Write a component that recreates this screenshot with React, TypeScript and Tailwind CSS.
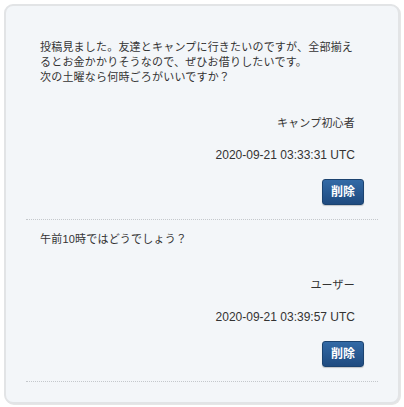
const comments = [
  {
    id: 1,
    body: "投稿見ました。友達とキャンプに行きたいのですが、全部揃えるとお金かかりそうなので、ぜひお借りしたいです。\n次の土曜なら何時ごろがいいですか？",
    user: "キャンプ初心者",
    createdAt: "2020-09-21 03:33:31 UTC",
  },
  {
    id: 2,
    body: "午前10時ではどうでしょう？",
    user: "ユーザー",
    createdAt: "2020-09-21 03:39:57 UTC",
  },
];

export default function App() {
  return (
    <div className="min-h-[407px] bg-white p-[4px] font-['Liberation_Sans','Noto_Sans_CJK_JP',sans-serif] text-[#333]">
      <div className="rounded-[9px] border-2 border-[#e2e4e6] bg-[#f3f6f9] px-[20px] pb-[20px] pt-[34px] shadow-[1px_1px_0_#e6e6e6]">
        <ul>
          {comments.map((c, i) => (
            <li
              key={c.id}
              className={`border-b border-dotted border-[#c4c8cc] px-[14px] pb-[14px] ${i > 0 ? "pt-[12px]" : ""}`}
            >
              {/* comment body */}
              <p className="mr-[9px] whitespace-pre-line text-[11px] leading-[15px] tracking-[0.2px]">
                {c.body}
              </p>

              <p className="mr-[9px] mt-[30px] text-right text-[11px] leading-[16px] tracking-[0.2px]">
                {c.user}
              </p>

              <p className="mr-[9px] mt-[16px] text-right text-[12px] leading-[16px]">
                {c.createdAt}
              </p>

              <div className="mt-[16px] flex justify-end">
                <button className="h-[26px] w-[42px] rounded-[3px] border border-[#1b4370] bg-gradient-to-b from-[#336aa6] to-[#1f4b80] text-[12px] font-bold text-white shadow-[0_1px_1px_rgba(0,0,0,0.2)]">
                  削除
                </button>
              </div>
            </li>
          ))}
        </ul>
      </div>
    </div>
  );
}
